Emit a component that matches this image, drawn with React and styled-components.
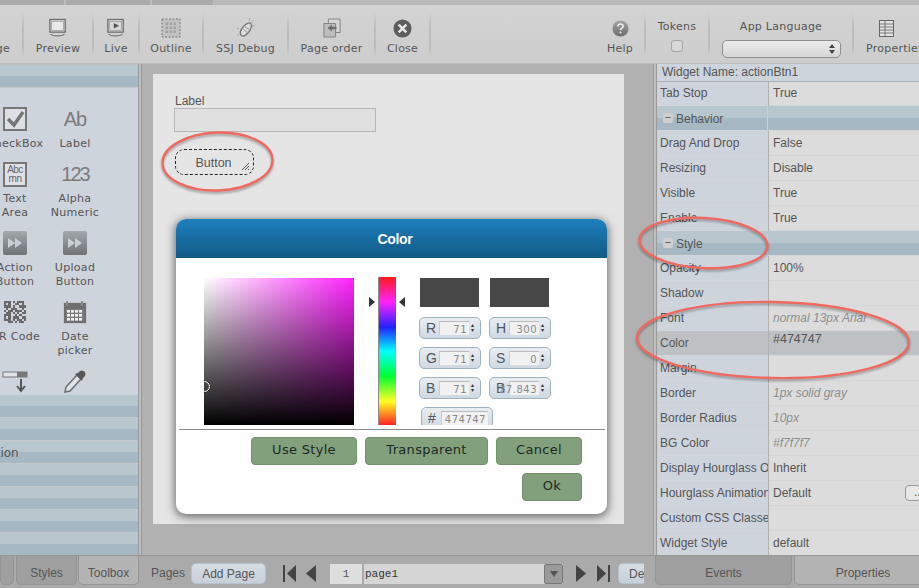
import React from "react";
import styled, { createGlobalStyle } from "styled-components";

const Global = createGlobalStyle`
  html, body { margin: 0; padding: 0; background: #b1b1b1; }
  * { box-sizing: border-box; }
`;

const Shell = styled.div`
  position: relative;
  width: 919px;
  height: 588px;
  overflow: hidden;
  display: flex;
  flex-direction: column;
  background: #b1b1b1;
  font-family: "Liberation Sans", Arial, sans-serif;
  color: #555;
`;

/* top strip and toolbar */
const TopStrip = styled.div`
  height: 5px;
  display: flex;
  gap: 2px;
  background: #bababa;
`;
const TopTab = styled.div`
  width: ${(p) => p.$w}px;
  background: #ababab;
`;
const Toolbar = styled.div`
  height: 59px;
  display: flex;
  background: linear-gradient(#d3d3d3, #cdcdcd);
  font-family: "DejaVu Sans", Verdana, sans-serif;
  font-size: 11px;
  letter-spacing: 0.25px;
  border-bottom: 1px solid #bcbcbc;
`;
const Tool = styled.div`
  width: ${(p) => p.$w}px;
  flex: none;
  display: flex;
  flex-direction: column;
  align-items: ${(p) => p.$align || "center"};
  padding-top: ${(p) => p.$top || 12}px;
  padding-right: ${(p) => p.$right ?? 2}px;
  overflow: hidden;
  white-space: nowrap;
  ${(p) => p.$divider && `background: linear-gradient(transparent 12%, #bcbcbc 40%, #bcbcbc 70%, transparent 90%) right / 2px 100% no-repeat;`}
`;
const ToolIcon = styled.div`
  height: 22px;
  display: flex;
  align-items: center;
  justify-content: center;
  ${(p) => p.$selfCenter && "align-self: center;"}
`;
const ToolLabel = styled.div`
  margin-top: 3px;
  line-height: 14px;
  ${(p) => p.$inset && `margin-left: ${p.$inset}px;`}
`;
const Spacer = styled.div`
  flex: 1;
`;
const CheckBox = styled.span`
  width: 12px;
  height: 12px;
  margin-top: 7px;
  border: 1px solid #a5a5a5;
  border-radius: 3px;
  background: #d8d8d8;
`;
const LangSelect = styled.div`
  width: 119px;
  height: 18px;
  margin-top: 7px;
  padding-right: 5px;
  display: flex;
  align-items: center;
  justify-content: flex-end;
  border: 1px solid #8f8f8f;
  border-radius: 5px;
  background: linear-gradient(#ececec, #d6d6d6);
`;

/* middle area */
const Main = styled.div`
  height: 491px;
  display: flex;
`;
const LeftPanel = styled.div`
  width: 138px;
  flex: none;
  display: flex;
  flex-direction: column;
  overflow: hidden;
  background: #cdd4dc;
  border-top: 1px solid #c0c0c0;
`;
const Stripe = styled.div`
  height: 23px;
  flex: none;
  line-height: 24px;
  font-family: "DejaVu Sans", Verdana, sans-serif;
  font-size: 12px;
  white-space: nowrap;
  background: linear-gradient(#b8c7ce 0 50%, #a5b8c4 50% 100%);
  border-bottom: 1px solid #c5c8ca;
`;
const StripeText = styled.div`
  margin-left: -46px;
`;
const IconGrid = styled.div`
  height: 307px;
  flex: none;
  margin-left: -15px;
  padding-top: 18px;
  display: grid;
  grid-template-columns: 60px 60px;
  grid-auto-rows: min-content;
  row-gap: 10px;
  overflow: hidden;
`;
const Tile = styled.div`
  width: 60px;
  display: flex;
  flex-direction: column;
  align-items: center;
  font-family: "DejaVu Sans", Verdana, sans-serif;
  font-size: 11px;
  letter-spacing: 0.3px;
  line-height: 14px;
  text-align: center;
  white-space: nowrap;
`;
const TileIcon = styled.div`
  height: 26px;
  margin-bottom: 5px;
  display: flex;
  align-items: center;
  justify-content: center;
`;
const GlyphText = styled.span`
  font-family: "Liberation Sans", Arial, sans-serif;
  font-size: 20px;
  letter-spacing: ${(p) => p.$track || -1}px;
  color: #7c7c7c;
`;
const AreaIcon = styled.div`
  width: 24px;
  height: 25px;
  padding-top: 1px;
  border: 2px solid #777;
  font-family: "Liberation Sans", Arial, sans-serif;
  font-size: 10px;
  line-height: 9px;
  letter-spacing: -0.5px;
  color: #666;
  background: #dde1e6;
`;
const Splitter = styled.div`
  width: ${(p) => p.$w}px;
  flex: none;
  background: linear-gradient(90deg, #9d9d9d 0 1px, #bdbdbd 1px 3px, #9a9a9a 3px 4px, #b1b1b1 4px);
`;
const Workspace = styled.div`
  width: 510px;
  flex: none;
  padding: 10px 29px 31px 10px;
  background: #b1b1b1;
`;
const Page = styled.div`
  position: relative;
  height: 100%;
  padding: 20px 0 0 21px;
  background: #e5e5e5;
  font-size: 12px;
`;
const FieldLabel = styled.div`
  margin-left: 1px;
  line-height: 14px;
`;
const FieldInput = styled.div`
  width: 202px;
  height: 24px;
  background: #e0e0e0;
  border: 1px solid #b7b7b7;
`;
const WidgetButton = styled.div`
  position: relative;
  width: 79px;
  height: 26px;
  margin: 17px 0 0 1px;
  padding-top: 1px;
  padding-right: 2px;
  display: flex;
  align-items: center;
  justify-content: center;
  border: 1px dashed #222;
  border-radius: 9px;
  font-size: 12.5px;
  color: #555;
`;
const ResizeGrip = styled.svg`
  position: absolute;
  right: 3px;
  bottom: 3px;
`;

/* color dialog */
const Dialog = styled.div`
  position: absolute;
  left: 23px;
  top: 145px;
  width: 431px;
  height: 295px;
  display: flex;
  flex-direction: column;
  background: #fff;
  border-radius: 10px;
  overflow: hidden;
  box-shadow: 0 2px 10px 1px rgba(0, 0, 0, 0.55);
`;
const DialogHead = styled.div`
  height: 39px;
  flex: none;
  padding-left: 7px;
  display: flex;
  align-items: center;
  justify-content: center;
  color: #fff;
  font-size: 14px;
  font-weight: bold;
  letter-spacing: -0.3px;
  background: linear-gradient(#1e80be, #125985);
`;
const PickerRow = styled.div`
  height: 148px;
  margin-top: 19px;
  padding-left: 28px;
  display: flex;
  overflow: hidden;
`;
const SatBox = styled.div`
  position: relative;
  width: 150px;
  height: 147px;
  margin-top: 1px;
  overflow: hidden;
  background: linear-gradient(transparent, #000), linear-gradient(90deg, #fff, #ff22ff);
`;
const SatMark = styled.div`
  position: absolute;
  left: -5px;
  top: 103px;
  width: 11px;
  height: 11px;
  border: 1px solid #fff;
  border-radius: 50%;
  box-shadow: 0 0 0 0.5px #111;
`;
const HueWrap = styled.div`
  position: relative;
  width: 36px;
  margin-left: 15px;
  flex: none;
`;
const HueBar = styled.div`
  width: 18px;
  height: 148px;
  margin-left: 9px;
  border-left: 1px solid #8a8a8a;
  background: linear-gradient(#ff1a1a, #ff22ff 17%, #2222ff 34%, #00ffff 50%, #00ff33 67%, #ffff22 84%, #ff2222);
`;
const HueArrow = styled.div`
  position: absolute;
  top: 20px;
  ${(p) => (p.$right ? "right: 0;" : "left: 0;")}
  width: 0;
  height: 0;
  border-top: 5px solid transparent;
  border-bottom: 5px solid transparent;
  ${(p) => (p.$right ? "border-right: 6px solid #333;" : "border-left: 6px solid #333;")}
`;
const ColorSide = styled.div`
  margin-left: 14px;
  display: grid;
  grid-template-columns: 62px 62px;
  grid-template-rows: 32px 22px 22px 22px 22px;
  column-gap: 8px;
  row-gap: 8px;
  align-content: start;
`;
const Swatch = styled.div`
  width: 59px;
  height: 29px;
  margin: 1px 0 0 1px;
  background: #474747;
`;
const ColorGroup = styled.div`
  width: ${(p) => p.$w || 62}px;
  height: 22px;
  ${(p) => p.$shift && "margin-left: 2px;"}
  display: flex;
  align-items: center;
  padding: 0 4px 0 6px;
  border: 1px solid #9fb2c1;
  border-radius: 5px;
  background: linear-gradient(#e8edf2, #cfd9e2);
  font-size: 14px;
  color: #555;
`;
const GroupLetter = styled.span`
  width: 13px;
  flex: none;
`;
const GroupInput = styled.span`
  flex: 1;
  min-width: 0;
  height: 14px;
  display: flex;
  justify-content: flex-end;
  line-height: 15px;
  padding-right: 2px;
  white-space: nowrap;
  font-family: "DejaVu Sans", Verdana, sans-serif;
  font-size: 10px;
  letter-spacing: 0.5px;
  color: #888;
  background: #f1f1f1;
  border-top: 1px solid #bbb;
  border-left: 1px solid #ccc;
`;
const Spin = styled.span`
  width: 5px;
  margin-left: 2px;
  flex: none;
  font-size: 6px;
  line-height: 5px;
  color: #333;
`;
const DialogRule = styled.div`
  height: 1px;
  margin: 4px 2px 0 3px;
  background: #8c8c8c;
`;
const ButtonRow = styled.div`
  display: flex;
  justify-content: flex-end;
  gap: 8px;
  margin-top: ${(p) => p.$top}px;
  padding-right: 25px;
`;
const DialogButton = styled.div`
  width: ${(p) => p.$w}px;
  height: 28px;
  padding-bottom: 4px;
  display: flex;
  align-items: center;
  justify-content: center;
  background: #83a07d;
  border: 1px solid #75906f;
  border-radius: 4px;
  font-family: "DejaVu Sans", Verdana, sans-serif;
  font-size: 13px;
  letter-spacing: 0.3px;
  color: #1c2a22;
`;

/* right panel */
const RightPanel = styled.div`
  width: 262px;
  flex: none;
  display: flex;
  flex-direction: column;
  overflow: hidden;
  font-size: 12px;
`;
const NameRow = styled.div`
  height: 18px;
  flex: none;
  padding-left: 5px;
  line-height: 17px;
  background: #cdd4dc;
  border-bottom: 1px solid #adb0b3;
  white-space: nowrap;
`;
const PropRow = styled.div`
  height: ${(p) => (p.$first ? 24 : 25)}px;
  flex: none;
  display: grid;
  grid-template-columns: 111px 1fr;
  line-height: ${(p) => (p.$first ? 22 : 24)}px;
  white-space: nowrap;
`;
const PropName = styled.div`
  overflow: hidden;
  padding-left: 3px;
  background: ${(p) => (p.$hot ? "#bdc1c4" : "#cdd4dc")};
  border-bottom: 1px solid #d3d7db;
`;
const PropValue = styled.div`
  position: relative;
  padding-left: 4px;
  margin-left: 1px;
  background: ${(p) => (p.$hot ? "#bdc1c4" : "#dcdcdc")};
  border-bottom: 1px solid #d3d7db;
  ${(p) => p.$hot && "line-height: 17px; font-size: 12.5px;"}
  ${(p) => p.$soft && "font-style: italic; color: #8e8e8e;"}
`;
const Ellipsis = styled.div`
  position: absolute;
  right: -2px;
  top: 4px;
  width: 16px;
  height: 16px;
  padding-left: 8px;
  line-height: 13px;
  border: 1px solid #9a9a9a;
  border-radius: 4px;
  background: #e8e8e8;
`;
const SectionRow = styled.div`
  height: 25px;
  flex: none;
  display: grid;
  grid-template-columns: 111px 1fr;
  line-height: 25px;
  background: linear-gradient(#b8c7ce 0 50%, #a5b8c4 50% 100%);
  border-bottom: 1px solid #d3d7db;
`;
const SectionName = styled.div`
  display: flex;
  align-items: center;
  gap: 3px;
  padding: 1px 0 0 6px;
  border-right: 1px solid #c9d0d5;
`;
const Toggle = styled.span`
  width: 10px;
  height: 10px;
  margin-top: -4px;
  border-radius: 2px;
  background: #cfcfcf;
  line-height: 8px;
  text-align: center;
  font-size: 11px;
`;

/* bottom bar */
const BottomBar = styled.div`
  height: 33px;
  display: flex;
  background: #aaaaaa;
  border-top: 1px solid #979797;
  font-size: 12px;
`;
const BottomTab = styled.div`
  width: ${(p) => p.$w}px;
  height: 29px;
  flex: none;
  padding-top: 5px;
  display: flex;
  align-items: center;
  justify-content: center;
  margin-left: ${(p) => p.$gap || 0}px;
  background: ${(p) => (p.$on ? "#b3b3b3" : "#9f9f9f")};
  border: 1px solid #949494;
  border-top: none;
  border-radius: 0 0 5px 5px;
`;
const PagesLabel = styled.div`
  flex: none;
  margin-left: 12px;
  width: 40px;
  line-height: 34px;
`;
const PillButton = styled.div`
  width: ${(p) => p.$w}px;
  height: 21px;
  margin: 7px 0 0 ${(p) => p.$gap}px;
  flex: none;
  display: flex;
  align-items: center;
  justify-content: ${(p) => (p.$clip ? "flex-start" : "center")};
  padding-left: ${(p) => (p.$clip ? "10px" : "0")};
  overflow: hidden;
  white-space: nowrap;
  background: linear-gradient(#d5dde4, #c7d0d8);
  border: 1px solid #b5c3cf;
  border-right: ${(p) => (p.$clip ? "none" : "1px solid #b5c3cf")};
  border-radius: ${(p) => (p.$clip ? "5px 0 0 5px" : "5px")};
`;
const NavIcons = styled.div`
  margin: 9px 0 0 ${(p) => p.$gap}px;
  display: flex;
  gap: ${(p) => p.$space}px;
  flex: none;
  align-self: flex-start;
`;
const PageNumber = styled.div`
  width: 32px;
  height: 20px;
  margin: 8px 0 0 14px;
  flex: none;
  line-height: 20px;
  text-align: center;
  font-family: "Liberation Mono", monospace;
  font-size: 11px;
  background: #dedede;
`;
const PageSelect = styled.div`
  width: 199px;
  height: 20px;
  margin: 8px 0 0 2px;
  flex: none;
  display: flex;
  justify-content: space-between;
  padding-left: 1px;
  line-height: 20px;
  font-family: "Liberation Mono", monospace;
  font-size: 11px;
  color: #333;
  background: #d5d5d5;
`;
const SelectDrop = styled.div`
  width: 19px;
  height: 20px;
  display: flex;
  align-items: center;
  justify-content: center;
  background: #9a9a9a;
  border: 1px solid #777;
  border-radius: 2px;
`;
const Notes = styled.svg`
  position: absolute;
  left: 0;
  top: 0;
  pointer-events: none;
  filter: drop-shadow(0 2px 1px rgba(0, 0, 0, 0.3));
`;

const Monitor = ({ play }) => (
  <svg width="18" height="21" viewBox="0 0 20 22" fill="none">
    <rect x="1" y="1" width="17" height="14" fill="#e4e4e4" stroke="#6d6d6d" strokeWidth="1.5" />
    <rect x="3" y="3" width="13" height="10" fill={play ? "#d8d8d8" : "#e9e9e9"} stroke="#8a8a8a" strokeWidth="0.7" />
    {play && <path d="M7.5 5l6 3-6 3z" fill="#555" />}
    <path d="M2 17c1 3 14 3 15 0" stroke="#777" strokeWidth="1.5" />
  </svg>
);

const OutlineIcon = () => (
  <svg width="20" height="20" viewBox="0 0 20 20">
    <rect x="1" y="1" width="18" height="18" fill="#c2c2c2" stroke="#666" strokeWidth="0.8" strokeDasharray="2 1.5" />
    {[4, 8, 12].map((y) => [4, 8, 12].map((x) => <rect key={x + "-" + y} x={x + 0.5} y={y + 0.5} width="2.5" height="2.5" fill="#a2a2a2" />))}
  </svg>
);

const BugIcon = () => (
  <svg width="20" height="22" viewBox="0 0 20 22" fill="none">
    <path d="M6 19c-3-2-2-6 2-10 3-3 6-4 7-2s0 6-3 9c-2 2-4 4-6 3z" fill="#dcdcdc" stroke="#777" strokeWidth="1.3" />
    <path d="M7 12l5 4M9 10l5 3" stroke="#999" />
    <path d="M15 6l3-3M13 4l1-3M16 9l3 0M3 12l-2-1M3 17l-2 2" stroke="#aaa" />
  </svg>
);

const PageOrderIcon = () => (
  <svg width="18" height="20" viewBox="0 0 20 22">
    <path d="M6 1h13v15H6z" fill="#d6d6d6" stroke="#7d7d7d" />
    <path d="M1 6h13v15H1z" fill="#bdbdbd" stroke="#7d7d7d" />
    <path d="M5 11l5-4v2.5h5v3h-5V15z" fill="#6f6f6f" />
  </svg>
);

const CloseIcon = () => (
  <svg width="19" height="19" viewBox="0 0 20 20">
    <circle cx="10" cy="10" r="9.5" fill="#5d5d5d" />
    <path d="M6 6l8 8M14 6l-8 8" stroke="#e8e8e8" strokeWidth="2.6" />
  </svg>
);

const HelpIcon = () => (
  <svg width="17" height="17" viewBox="0 0 18 18">
    <defs>
      <linearGradient id="helpFill" x1="0" y1="0" x2="0" y2="1">
        <stop offset="0" stopColor="#a5a5a5" />
        <stop offset="1" stopColor="#6d6d6d" />
      </linearGradient>
    </defs>
    <circle cx="9" cy="9" r="8.5" fill="url(#helpFill)" />
    <path d="M6.2 7c0-3.6 5.6-3.6 5.6-.4 0 2-2.8 2-2.8 4" stroke="#eee" strokeWidth="1.7" fill="none" />
    <circle cx="9" cy="13.3" r="1.1" fill="#eee" />
  </svg>
);

const PropertiesIcon = () => (
  <svg width="15" height="17" viewBox="0 0 15 17" fill="none" stroke="#666">
    <rect x="0.5" y="0.5" width="14" height="16" fill="#e2e2e2" />
    <path d="M1 4h13M1 7h13M1 10h13M1 13h13M6 1v15" strokeWidth="0.8" />
  </svg>
);

const SelectArrows = () => (
  <svg width="6" height="10" viewBox="0 0 6 10">
    <path d="M3 0l3 4H0zM3 10L0 6h6z" fill="#444" />
  </svg>
);

const CheckIcon = () => (
  <svg width="24" height="24" viewBox="0 0 24 24" fill="none">
    <rect x="1" y="1" width="22" height="22" fill="#dce0e5" stroke="#777" strokeWidth="2" />
    <path d="M5 12l6 6 9-13" stroke="#757575" strokeWidth="3.4" />
  </svg>
);

const ActionIcon = () => (
  <svg width="24" height="24" viewBox="0 0 24 24">
    <defs>
      <linearGradient id="actionFill" x1="0" y1="0" x2="0" y2="1">
        <stop offset="0" stopColor="#a2a8ad" />
        <stop offset="1" stopColor="#6f7376" />
      </linearGradient>
    </defs>
    <rect width="24" height="24" rx="2" fill="url(#actionFill)" />
    <path d="M5 7l7 5-7 5zM12 7l7 5-7 5z" fill="#c9cfd4" />
  </svg>
);

const QR_ROWS = ["1110101110", "1010011010", "1110100111", "0101110010", "1011011101", "0110101011", "1110010100", "1010111011", "1110101101", "0011010110"];
const QrIcon = () => (
  <svg width="22" height="22" viewBox="0 0 10 10" shapeRendering="crispEdges">
    {QR_ROWS.map((row, y) => row.split("").map((c, x) => (c === "1" ? <rect key={x + "-" + y} x={x} y={y} width="1" height="1" fill="#6a6a6a" /> : null)))}
  </svg>
);

const CalendarIcon = () => (
  <svg width="24" height="24" viewBox="0 0 24 24">
    <rect x="0.5" y="2.5" width="23" height="21" fill="#dfe3e7" stroke="#c3c8cd" />
    <rect x="1" y="3" width="22" height="20" fill="#6f6f6f" />
    <rect x="3" y="1" width="2" height="5" fill="#8a8a8a" />
    <rect x="18" y="1" width="2" height="5" fill="#8a8a8a" />
    <rect x="3" y="9" width="18" height="12" fill="#7b7b7b" />
    {[10, 14, 18].map((y) => [4, 8, 12, 16].map((x) => <rect key={x + "-" + y} x={x} y={y} width="3" height="2.6" fill="#eef0f2" />))}
  </svg>
);

const DropIcon = () => (
  <svg width="26" height="25" viewBox="0 0 26 25" fill="none">
    <rect x="1" y="3" width="24" height="5" fill="#dfe2e6" stroke="#777" />
    <rect x="15" y="3" width="10" height="5" fill="#777" />
    <path d="M19 10v11M15 17l4 5 4-5" stroke="#555" strokeWidth="2" />
  </svg>
);

const DropperIcon = () => (
  <svg width="26" height="26" viewBox="0 0 26 26" fill="none">
    <path d="M15 7L4 19l-1 5 5-1 11-12z" fill="#dfe3e7" stroke="#6d6d6d" strokeWidth="1.5" />
    <path d="M13 6l7 7 1-3 2-2c2-3-2-7-5-5l-2 2z" fill="#585858" />
  </svg>
);

const Nav = ({ kind }) => {
  if (kind === "first") return <svg width="15" height="17" viewBox="0 0 15 17"><path d="M1 0h2v17H1zM14 0v17L5 8.500z" fill="#444" /></svg>;
  if (kind === "prev") return <svg width="10" height="17" viewBox="0 0 10 17"><path d="M10 0v17L0 8.500z" fill="#444" /></svg>;
  if (kind === "next") return <svg width="10" height="17" viewBox="0 0 10 17"><path d="M0 0v17l10-8.500z" fill="#444" /></svg>;
  return <svg width="15" height="17" viewBox="0 0 15 17"><path d="M12 0h2v17h-2zM1 0v17l9-8.500z" fill="#444" /></svg>;
};

const tiles = [
  { icon: <CheckIcon />, label: ["CheckBox"] },
  { icon: <GlyphText>Ab</GlyphText>, label: ["Label"] },
  { icon: <AreaIcon>Abc<br />mn</AreaIcon>, label: ["Text", "Area"] },
  { icon: <GlyphText $track={-2}>123</GlyphText>, label: ["Alpha", "Numeric"] },
  { icon: <ActionIcon />, label: ["Action", "Button"] },
  { icon: <ActionIcon />, label: ["Upload", "Button"] },
  { icon: <QrIcon />, label: ["QR Code"] },
  { icon: <CalendarIcon />, label: ["Date", "picker"] },
  { icon: <DropIcon />, label: [] },
  { icon: <DropperIcon />, label: [] },
];

const props = [
  { name: "Tab Stop", value: "True", first: true },
  { section: "Behavior" },
  { name: "Drag And Drop", value: "False" },
  { name: "Resizing", value: "Disable" },
  { name: "Visible", value: "True" },
  { name: "Enable", value: "True" },
  { section: "Style" },
  { name: "Opacity", value: "100%" },
  { name: "Shadow", value: "" },
  { name: "Font", value: "normal 13px Arial", soft: true },
  { name: "Color", value: "#474747", hot: true },
  { name: "Margin", value: "" },
  { name: "Border", value: "1px solid gray", soft: true },
  { name: "Border Radius", value: "10px", soft: true },
  { name: "BG Color", value: "#f7f7f7", soft: true },
  { name: "Display Hourglass On Action", value: "Inherit" },
  { name: "Hourglass Animation", value: "Default", more: true },
  { name: "Custom CSS Classes", value: "" },
  { name: "Widget Style", value: "default" },
];

const colorFields = [
  ["R", "71", "H", "300"],
  ["G", "71", "S", "0"],
  ["B", "71", "B", "27.843"],
];

const Field = ({ letter, value, w, shift, noSpin }) => (
  <ColorGroup $w={w} $shift={shift}>
    <GroupLetter>{letter}</GroupLetter>
    <GroupInput>{value}</GroupInput>
    {!noSpin && <Spin>▴<br />▾</Spin>}
  </ColorGroup>
);

export default function App() {
  return (
    <Shell>
      <Global />
      <TopStrip>
        <TopTab $w={64} />
        <TopTab $w={84} />
        <TopTab $w={61} />
      </TopStrip>
      <Toolbar>
        <Tool $w={24} $align="flex-end" $right={14} $divider>
          <ToolIcon />
          <ToolLabel>Page</ToolLabel>
        </Tool>
        <Tool $w={70} $divider><ToolIcon><Monitor /></ToolIcon><ToolLabel>Preview</ToolLabel></Tool>
        <Tool $w={46} $divider><ToolIcon><Monitor play /></ToolIcon><ToolLabel>Live</ToolLabel></Tool>
        <Tool $w={64} $divider><ToolIcon><OutlineIcon /></ToolIcon><ToolLabel>Outline</ToolLabel></Tool>
        <Tool $w={85} $divider><ToolIcon><BugIcon /></ToolIcon><ToolLabel>SSJ Debug</ToolLabel></Tool>
        <Tool $w={87} $divider><ToolIcon><PageOrderIcon /></ToolIcon><ToolLabel>Page order</ToolLabel></Tool>
        <Tool $w={55} $divider><ToolIcon><CloseIcon /></ToolIcon><ToolLabel>Close</ToolLabel></Tool>
        <Spacer />
        <Tool $w={48} $right={4} $divider><ToolIcon><HelpIcon /></ToolIcon><ToolLabel>Help</ToolLabel></Tool>
        <Tool $w={64} $top={15} $divider><div>Tokens</div><CheckBox /></Tool>
        <Tool $w={144} $top={15} $divider><div>App Language</div><LangSelect><SelectArrows /></LangSelect></Tool>
        <Tool $w={65} $right={0} $align="flex-start"><ToolIcon $selfCenter><PropertiesIcon /></ToolIcon><ToolLabel $inset={12}>Properties</ToolLabel></Tool>
      </Toolbar>

      <Main>
        <LeftPanel>
          <Stripe />
          <IconGrid>
            {tiles.map((t, i) => (
              <Tile key={i}>
                <TileIcon>{t.icon}</TileIcon>
                {t.label.map((l) => <div key={l}>{l}</div>)}
              </Tile>
            ))}
          </IconGrid>
          <Stripe />
          <Stripe />
          <Stripe><StripeText>Navigation</StripeText></Stripe>
          <Stripe />
          <Stripe />
          <Stripe />
          <Stripe />
        </LeftPanel>
        <Splitter $w={5} />
        <Workspace>
          <Page>
            <FieldLabel>Label</FieldLabel>
            <FieldInput />
            <WidgetButton>
              Button
              <ResizeGrip width="9" height="9" viewBox="0 0 9 9">
                <path d="M8 1L1 8M8 4L4 8M8 7L7 8" stroke="#555" />
              </ResizeGrip>
            </WidgetButton>
            <Dialog>
              <DialogHead>Color</DialogHead>
              <PickerRow>
                <SatBox><SatMark /></SatBox>
                <HueWrap>
                  <HueArrow />
                  <HueBar />
                  <HueArrow $right />
                </HueWrap>
                <ColorSide>
                  <Swatch />
                  <Swatch />
                  {colorFields.map(([a, av, b, bv]) => (
                    <React.Fragment key={a}>
                      <Field letter={a} value={av} />
                      <Field letter={b} value={bv} />
                    </React.Fragment>
                  ))}
                  <Field letter="#" value="474747" w={72} shift noSpin />
                </ColorSide>
              </PickerRow>
              <DialogRule />
              <ButtonRow $top={7}>
                <DialogButton $w={106}>Use Style</DialogButton>
                <DialogButton $w={123}>Transparent</DialogButton>
                <DialogButton $w={86}>Cancel</DialogButton>
              </ButtonRow>
              <ButtonRow $top={8}>
                <DialogButton $w={60}>Ok</DialogButton>
              </ButtonRow>
            </Dialog>
          </Page>
        </Workspace>
        <Splitter $w={4} />
        <RightPanel>
          <NameRow>Widget Name: actionBtn1</NameRow>
          {props.map((p) =>
            p.section ? (
              <SectionRow key={p.section}>
                <SectionName><Toggle>−</Toggle>{p.section}</SectionName>
                <div />
              </SectionRow>
            ) : (
              <PropRow key={p.name} $first={p.first}>
                <PropName $hot={p.hot}>{p.name}</PropName>
                <PropValue $hot={p.hot} $soft={p.soft}>
                  {p.value}
                  {p.more && <Ellipsis>...</Ellipsis>}
                </PropValue>
              </PropRow>
            )
          )}
        </RightPanel>
      </Main>

      <BottomBar>
        <BottomTab $w={14} />
        <BottomTab $w={61} $gap={2}>Styles</BottomTab>
        <BottomTab $w={61} $gap={1} $on>Toolbox</BottomTab>
        <PagesLabel>Pages</PagesLabel>
        <PillButton $w={75} $gap={0}>Add Page</PillButton>
        <NavIcons $gap={16} $space={9}><Nav kind="first" /><Nav kind="prev" /></NavIcons>
        <PageNumber>1</PageNumber>
        <PageSelect>
          page1
          <SelectDrop>
            <svg width="8" height="6" viewBox="0 0 8 6"><path d="M0 0h8L4 6z" fill="#555" /></svg>
          </SelectDrop>
        </PageSelect>
        <NavIcons $gap={13} $space={10}><Nav kind="next" /><Nav kind="last" /></NavIcons>
        <PillButton $w={26} $gap={7} $clip>Delete</PillButton>
        <BottomTab $w={137} $gap={11}>Events</BottomTab>
        <BottomTab $w={138} $gap={2} $on>Properties</BottomTab>
      </BottomBar>

      <Notes width="919" height="588" viewBox="0 0 919 588" fill="none" stroke="#f0695f" strokeWidth="2.4">
        <ellipse cx="217.500" cy="161.500" rx="55" ry="29" transform="rotate(-2 217.500 161.500)" />
        <ellipse cx="703.500" cy="243" rx="64" ry="25" transform="rotate(3 703.500 243)" />
        <ellipse cx="773" cy="340" rx="136" ry="38" transform="rotate(1 773 340)" />
      </Notes>
    </Shell>
  );
}
